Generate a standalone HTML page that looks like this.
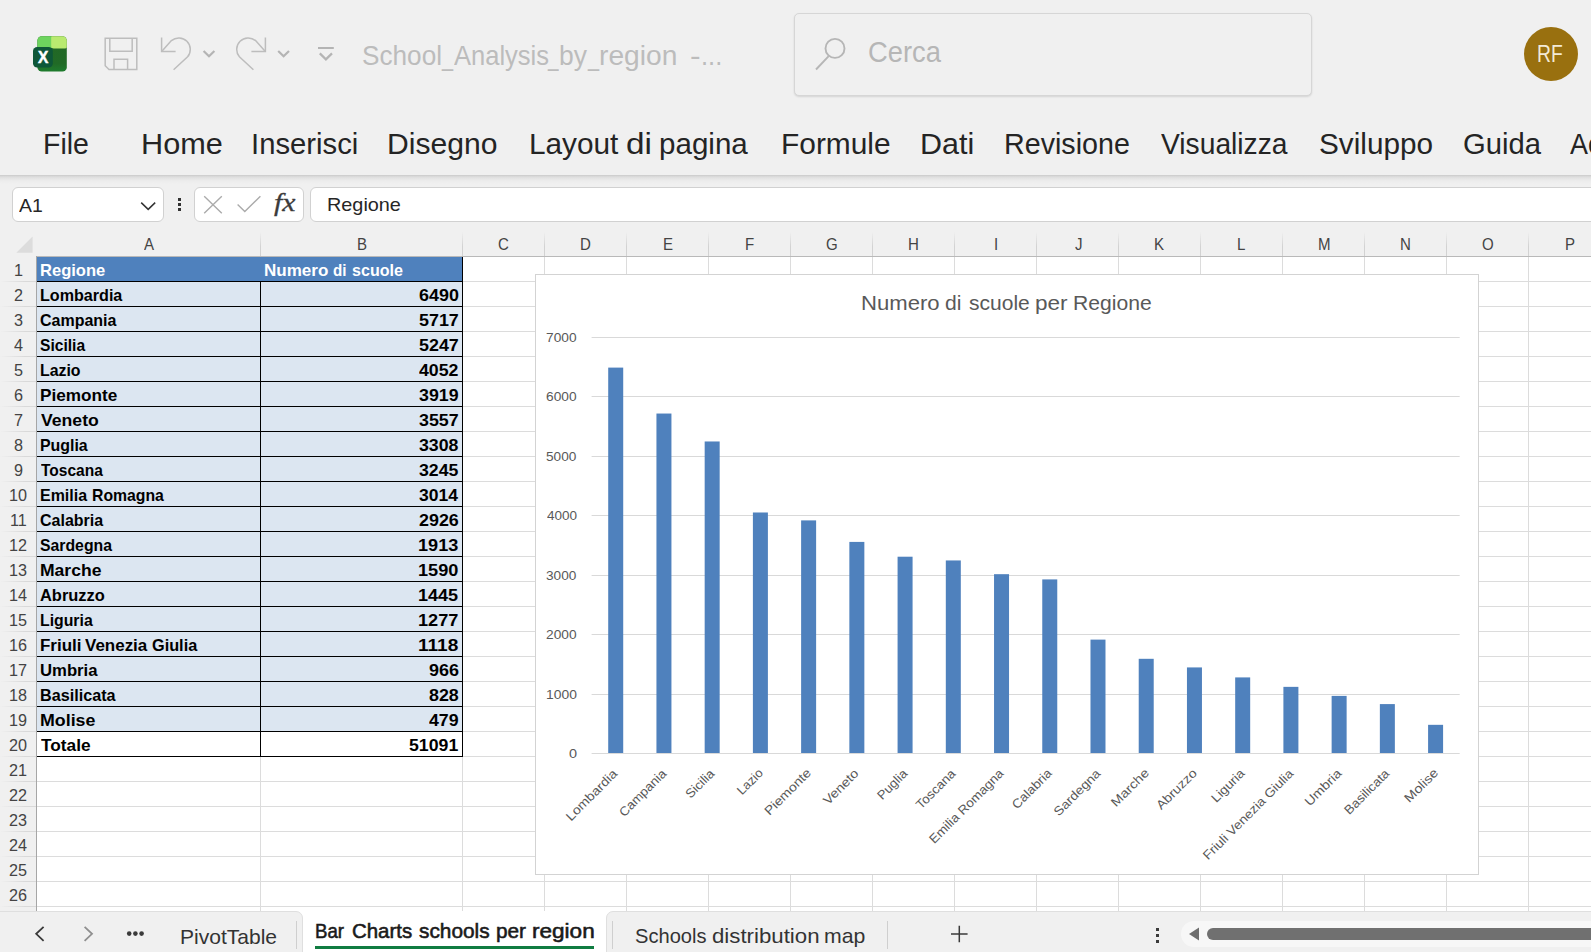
<!DOCTYPE html>
<html lang="it"><head><meta charset="utf-8"><title>School_Analysis_by_region - Excel</title>
<style>
html,body{margin:0;padding:0;width:1591px;height:952px;overflow:hidden;background:#f0f0f0}
#app{position:absolute;left:0;top:0;width:1591px;height:952px;overflow:hidden;background:#f0f0f0;
 font-family:"Liberation Sans",sans-serif;}
.t{position:absolute;white-space:nowrap;line-height:1;transform-origin:0 0;}
.abs{position:absolute}
svg{position:absolute;overflow:visible}
.vl{position:absolute;width:1px}
.hl{position:absolute;height:1px}
</style></head><body><div id="app">

<div id="titlebar">
<svg style="left:28px;top:30px" width="48" height="48" viewBox="28 30 48 48">
<defs><clipPath id="xc"><rect x="37.4" y="36.2" width="29.4" height="35.4" rx="4.4"/></clipPath>
<linearGradient id="xg" x1="0" y1="0" x2="0" y2="1"><stop offset="0" stop-color="#226625"/><stop offset="0.75" stop-color="#216a26"/><stop offset="1" stop-color="#1e7f2f"/></linearGradient></defs>
<g clip-path="url(#xc)">
<rect x="37" y="35" width="31" height="38" fill="url(#xg)"/>
<rect x="37" y="35" width="15" height="13" fill="#6dd45e"/>
<rect x="51.2" y="35.4" width="16.2" height="13" rx="2.5" fill="#b9ea70"/>
</g>
<rect x="33" y="46.9" width="19.8" height="20.7" rx="4.2" fill="#0e5738"/>
</svg>
<span class="t " style="left:38.05px;top:49.62px;font-size:15.92px;color:#fff;font-weight:700;transform:scaleX(0.9700);-webkit-text-stroke:0.5px #fff;">X</span>
<svg style="left:100px;top:30px" width="50" height="50" viewBox="100 30 50 50" fill="none" stroke="#bdbdbd" stroke-width="1.5" stroke-linejoin="miter">
<path d="M105.2 38.2 H136.8 V69.6 H109 L105.2 65.8 Z"/>
<path d="M109.8 38.2 V51.2 H132.2 V38.2"/>
<path d="M114 69.6 V59.2 H127.6 V69.6"/>
</svg>
<svg style="left:150px;top:30px" width="70" height="50" viewBox="150 30 70 50" fill="none" stroke="#bdbdbd" stroke-width="1.5">
<path d="M161.6 37.6 V51.6 H175.6"/>
<path d="M161.9 51.3 L171.4 40.6 A11.5 11.5 0 0 1 187.6 56.8 L173.6 69.8"/>
<path d="M203.6 51 L209 56.2 L214.4 51" stroke-width="2.2" stroke="#b4b4b4"/>
</svg>
<svg style="left:225px;top:30px" width="75" height="50" viewBox="225 30 75 50" fill="none" stroke="#bdbdbd" stroke-width="1.5">
<path d="M265.4 37.6 V51.6 H251.4"/>
<path d="M265.1 51.3 L255.6 40.6 A11.5 11.5 0 0 0 239.4 56.8 L253.4 69.8"/>
<path d="M278.2 51 L283.6 56.2 L289 51" stroke-width="2.2" stroke="#b4b4b4"/>
</svg>
<svg style="left:310px;top:40px" width="32" height="30" viewBox="310 40 32 30" fill="none" stroke="#bdbdbd" stroke-width="1.7">
<path d="M318 48 H333.8" stroke="#b4b4b4" stroke-width="2"/>
<path d="M319.8 53.4 L325.9 59.4 L332 53.4" stroke="#b4b4b4" stroke-width="2.2"/>
</svg>
<span class="t" style="left:0;top:41.89px;font-size:27.65px;color:#bcbcbc;"><span class="t" style="left:361.62px;top:0;transform:scaleX(0.9467)">School</span><span class="t" style="left:441.90px;top:0;transform:scaleX(0.7201)">_</span><span class="t" style="left:453.54px;top:0;transform:scaleX(0.9234)">Analysis</span><span class="t" style="left:548.48px;top:0;transform:scaleX(0.6829)">_</span><span class="t" style="left:558.88px;top:0;transform:scaleX(0.9558)">by</span><span class="t" style="left:587.90px;top:0;transform:scaleX(0.7201)">_</span><span class="t" style="left:598.77px;top:0;transform:scaleX(1.0193)">region</span></span>
<span class="t" style="left:0;top:41.89px;font-size:27.65px;color:#bcbcbc;"><span class="t" style="left:690.37px;top:0;transform:scaleX(1.1513)">-</span><span class="t" style="left:700.51px;top:0;transform:scaleX(0.9200)">...</span></span>
<div class="abs" style="left:794px;top:13px;width:516px;height:81px;border:1px solid #d6d6d6;border-radius:5px;box-shadow:0 1px 2px rgba(0,0,0,.12);background:#f0f0f0"></div>
<svg style="left:810px;top:32px" width="40" height="44" viewBox="810 32 40 44" fill="none" stroke="#b6b6b6" stroke-width="1.9">
<circle cx="835" cy="48.4" r="9.5"/><path d="M828.7 56.2 L816 69.5"/></svg>
<span class="t " style="left:867.83px;top:37.17px;font-size:29.33px;color:#b6b6b6;transform:scaleX(0.9318);">Cerca</span>
<div class="abs" style="left:1524px;top:27px;width:54px;height:54px;border-radius:50%;background:#99700f"></div>
<span class="t " style="left:1537.01px;top:43.49px;font-size:23.04px;color:#f3ead6;transform:scaleX(0.8375);">RF</span>
</div>
<div id="menu">
<span class="t " style="left:43.45px;top:128.92px;font-size:29.75px;color:#242424;transform:scaleX(0.9575);">File</span>
<span class="t " style="left:140.77px;top:128.92px;font-size:29.75px;color:#242424;transform:scaleX(1.0313);">Home</span>
<span class="t " style="left:251.19px;top:128.92px;font-size:29.75px;color:#242424;transform:scaleX(0.9833);">Inserisci</span>
<span class="t " style="left:386.52px;top:128.92px;font-size:29.75px;color:#242424;transform:scaleX(1.0118);">Disegno</span>
<span class="t" style="left:0;top:128.92px;font-size:29.75px;color:#242424;"><span class="t" style="left:528.84px;top:0;transform:scaleX(1.0007)">Layout</span> <span class="t" style="left:625.79px;top:0;transform:scaleX(1.1180)">di</span> <span class="t" style="left:659.08px;top:0;transform:scaleX(0.9936)">pagina</span></span>
<span class="t " style="left:781.03px;top:128.92px;font-size:29.75px;color:#242424;transform:scaleX(1.0049);">Formule</span>
<span class="t " style="left:919.89px;top:128.92px;font-size:29.75px;color:#242424;transform:scaleX(1.0245);">Dati</span>
<span class="t " style="left:1003.74px;top:128.92px;font-size:29.75px;color:#242424;transform:scaleX(0.9631);">Revisione</span>
<span class="t " style="left:1161.16px;top:128.92px;font-size:29.75px;color:#242424;transform:scaleX(0.9484);">Visualizza</span>
<span class="t " style="left:1318.96px;top:128.92px;font-size:29.75px;color:#242424;transform:scaleX(0.9995);">Sviluppo</span>
<span class="t " style="left:1462.64px;top:128.92px;font-size:29.75px;color:#242424;transform:scaleX(0.9828);">Guida</span>
<span class="t " style="left:1570.33px;top:128.92px;font-size:29.75px;color:#242424;transform:scaleX(0.9050);">Ac</span>
</div>
<div class="abs" style="left:0;top:175px;width:1591px;height:9px;background:linear-gradient(#c9c9c9 0,#d6d6d6 12%,#dfdfdf 25%,#e7e7e7 45%,#ececec 65%,#f0f0f0 100%)"></div>
<div id="formulabar">
<div class="abs" style="left:12px;top:187px;width:152px;height:35px;border:1px solid #d1d1d1;border-radius:6px;background:#fff;box-sizing:border-box"></div>
<span class="t " style="left:19.15px;top:195.70px;font-size:19.13px;color:#262626;transform:scaleX(1.0163);">A1</span>
<svg style="left:136px;top:196px" width="24" height="20" viewBox="136 196 24 20" fill="none" stroke="#333" stroke-width="1.5"><path d="M141.2 202.6 L148.2 209.4 L155.2 202.6"/></svg>
<div class="abs" style="left:177.5px;top:198.2px;width:3.2px;height:3px;background:#333"></div>
<div class="abs" style="left:177.5px;top:203.2px;width:3.2px;height:3px;background:#333"></div>
<div class="abs" style="left:177.5px;top:208.2px;width:3.2px;height:3px;background:#333"></div>
<div class="abs" style="left:194px;top:187px;width:110px;height:35px;border:1px solid #d1d1d1;border-radius:6px;background:#fff;box-sizing:border-box"></div>
<svg style="left:200px;top:190px" width="66" height="28" viewBox="200 190 66 28" fill="none" stroke="#ababab" stroke-width="1.4">
<path d="M204.2 196.2 L221.8 213.2 M221.8 196.2 L204.2 213.2"/>
<path d="M237.6 204.6 L244.8 211.6 L260.4 196.2"/></svg>
<span class="t " style="left:274.30px;top:189.51px;font-size:25.98px;color:#3b3b3b;font-family:'Liberation Serif',serif;font-style:italic;transform:scaleX(1.1466);-webkit-text-stroke:0.3px #3b3b3b;">fx</span>
<div class="abs" style="left:310px;top:187px;width:1300px;height:35px;border:1px solid #d1d1d1;border-radius:6px;background:#fff;box-sizing:border-box"></div>
<span class="t " style="left:326.66px;top:195.89px;font-size:18.44px;color:#262626;transform:scaleX(1.0758);">Regione</span>
</div>
<div id="grid">
<div class="abs" style="left:37px;top:257px;width:1554px;height:655px;background:#fff"></div>
<div class="vl" style="left:260px;top:257px;height:655px;background:#dcdcdc"></div>
<div class="vl" style="left:462px;top:257px;height:655px;background:#dcdcdc"></div>
<div class="vl" style="left:544px;top:257px;height:655px;background:#dcdcdc"></div>
<div class="vl" style="left:626px;top:257px;height:655px;background:#dcdcdc"></div>
<div class="vl" style="left:708px;top:257px;height:655px;background:#dcdcdc"></div>
<div class="vl" style="left:790px;top:257px;height:655px;background:#dcdcdc"></div>
<div class="vl" style="left:872px;top:257px;height:655px;background:#dcdcdc"></div>
<div class="vl" style="left:954px;top:257px;height:655px;background:#dcdcdc"></div>
<div class="vl" style="left:1036px;top:257px;height:655px;background:#dcdcdc"></div>
<div class="vl" style="left:1118px;top:257px;height:655px;background:#dcdcdc"></div>
<div class="vl" style="left:1200px;top:257px;height:655px;background:#dcdcdc"></div>
<div class="vl" style="left:1282px;top:257px;height:655px;background:#dcdcdc"></div>
<div class="vl" style="left:1364px;top:257px;height:655px;background:#dcdcdc"></div>
<div class="vl" style="left:1446px;top:257px;height:655px;background:#dcdcdc"></div>
<div class="vl" style="left:1528px;top:257px;height:655px;background:#dcdcdc"></div>
<div class="vl" style="left:1610px;top:257px;height:655px;background:#dcdcdc"></div>
<div class="hl" style="left:37px;top:281px;width:1554px;background:#dcdcdc"></div>
<div class="hl" style="left:37px;top:306px;width:1554px;background:#dcdcdc"></div>
<div class="hl" style="left:37px;top:331px;width:1554px;background:#dcdcdc"></div>
<div class="hl" style="left:37px;top:356px;width:1554px;background:#dcdcdc"></div>
<div class="hl" style="left:37px;top:381px;width:1554px;background:#dcdcdc"></div>
<div class="hl" style="left:37px;top:406px;width:1554px;background:#dcdcdc"></div>
<div class="hl" style="left:37px;top:431px;width:1554px;background:#dcdcdc"></div>
<div class="hl" style="left:37px;top:456px;width:1554px;background:#dcdcdc"></div>
<div class="hl" style="left:37px;top:481px;width:1554px;background:#dcdcdc"></div>
<div class="hl" style="left:37px;top:506px;width:1554px;background:#dcdcdc"></div>
<div class="hl" style="left:37px;top:531px;width:1554px;background:#dcdcdc"></div>
<div class="hl" style="left:37px;top:556px;width:1554px;background:#dcdcdc"></div>
<div class="hl" style="left:37px;top:581px;width:1554px;background:#dcdcdc"></div>
<div class="hl" style="left:37px;top:606px;width:1554px;background:#dcdcdc"></div>
<div class="hl" style="left:37px;top:631px;width:1554px;background:#dcdcdc"></div>
<div class="hl" style="left:37px;top:656px;width:1554px;background:#dcdcdc"></div>
<div class="hl" style="left:37px;top:681px;width:1554px;background:#dcdcdc"></div>
<div class="hl" style="left:37px;top:706px;width:1554px;background:#dcdcdc"></div>
<div class="hl" style="left:37px;top:731px;width:1554px;background:#dcdcdc"></div>
<div class="hl" style="left:37px;top:756px;width:1554px;background:#dcdcdc"></div>
<div class="hl" style="left:37px;top:781px;width:1554px;background:#dcdcdc"></div>
<div class="hl" style="left:37px;top:806px;width:1554px;background:#dcdcdc"></div>
<div class="hl" style="left:37px;top:831px;width:1554px;background:#dcdcdc"></div>
<div class="hl" style="left:37px;top:856px;width:1554px;background:#dcdcdc"></div>
<div class="hl" style="left:37px;top:881px;width:1554px;background:#dcdcdc"></div>
<div class="hl" style="left:37px;top:906px;width:1554px;background:#dcdcdc"></div>
<div class="abs" style="left:0;top:232px;width:1591px;height:24px;background:#f0f0f0"></div>
<div class="hl" style="left:37px;top:256px;width:1554px;background:#b9b9b9"></div>
<div class="vl" style="left:260px;top:232px;height:24px;background:linear-gradient(#f0f0f0,#d2d2d2 60%)"></div>
<div class="vl" style="left:462px;top:232px;height:24px;background:linear-gradient(#f0f0f0,#d2d2d2 60%)"></div>
<div class="vl" style="left:544px;top:232px;height:24px;background:linear-gradient(#f0f0f0,#d2d2d2 60%)"></div>
<div class="vl" style="left:626px;top:232px;height:24px;background:linear-gradient(#f0f0f0,#d2d2d2 60%)"></div>
<div class="vl" style="left:708px;top:232px;height:24px;background:linear-gradient(#f0f0f0,#d2d2d2 60%)"></div>
<div class="vl" style="left:790px;top:232px;height:24px;background:linear-gradient(#f0f0f0,#d2d2d2 60%)"></div>
<div class="vl" style="left:872px;top:232px;height:24px;background:linear-gradient(#f0f0f0,#d2d2d2 60%)"></div>
<div class="vl" style="left:954px;top:232px;height:24px;background:linear-gradient(#f0f0f0,#d2d2d2 60%)"></div>
<div class="vl" style="left:1036px;top:232px;height:24px;background:linear-gradient(#f0f0f0,#d2d2d2 60%)"></div>
<div class="vl" style="left:1118px;top:232px;height:24px;background:linear-gradient(#f0f0f0,#d2d2d2 60%)"></div>
<div class="vl" style="left:1200px;top:232px;height:24px;background:linear-gradient(#f0f0f0,#d2d2d2 60%)"></div>
<div class="vl" style="left:1282px;top:232px;height:24px;background:linear-gradient(#f0f0f0,#d2d2d2 60%)"></div>
<div class="vl" style="left:1364px;top:232px;height:24px;background:linear-gradient(#f0f0f0,#d2d2d2 60%)"></div>
<div class="vl" style="left:1446px;top:232px;height:24px;background:linear-gradient(#f0f0f0,#d2d2d2 60%)"></div>
<div class="vl" style="left:1528px;top:232px;height:24px;background:linear-gradient(#f0f0f0,#d2d2d2 60%)"></div>
<div class="vl" style="left:1610px;top:232px;height:24px;background:linear-gradient(#f0f0f0,#d2d2d2 60%)"></div>
<span class="t " style="left:143.87px;top:236.39px;font-size:16.20px;color:#444;transform:scaleX(0.9299);">A</span>
<span class="t " style="left:356.65px;top:236.39px;font-size:16.20px;color:#444;transform:scaleX(0.9299);">B</span>
<span class="t " style="left:498.36px;top:236.39px;font-size:16.20px;color:#444;transform:scaleX(0.9299);">C</span>
<span class="t " style="left:580.19px;top:236.39px;font-size:16.20px;color:#444;transform:scaleX(0.9299);">D</span>
<span class="t " style="left:662.57px;top:236.39px;font-size:16.20px;color:#444;transform:scaleX(0.9299);">E</span>
<span class="t " style="left:744.97px;top:236.39px;font-size:16.20px;color:#444;transform:scaleX(0.9299);">F</span>
<span class="t " style="left:826.23px;top:236.39px;font-size:16.20px;color:#444;transform:scaleX(0.9299);">G</span>
<span class="t " style="left:908.46px;top:236.39px;font-size:16.20px;color:#444;transform:scaleX(0.9299);">H</span>
<span class="t " style="left:993.81px;top:236.39px;font-size:16.20px;color:#444;transform:scaleX(0.9299);">I</span>
<span class="t " style="left:1074.57px;top:236.39px;font-size:16.20px;color:#444;transform:scaleX(0.9299);">J</span>
<span class="t " style="left:1154.34px;top:236.39px;font-size:16.20px;color:#444;transform:scaleX(0.9299);">K</span>
<span class="t " style="left:1237.34px;top:236.39px;font-size:16.20px;color:#444;transform:scaleX(0.9299);">L</span>
<span class="t " style="left:1317.61px;top:236.39px;font-size:16.20px;color:#444;transform:scaleX(0.9299);">M</span>
<span class="t " style="left:1400.46px;top:236.39px;font-size:16.20px;color:#444;transform:scaleX(0.9299);">N</span>
<span class="t " style="left:1482.04px;top:236.39px;font-size:16.20px;color:#444;transform:scaleX(0.9299);">O</span>
<span class="t " style="left:1564.65px;top:236.39px;font-size:16.20px;color:#444;transform:scaleX(0.9299);">P</span>
<svg style="left:0;top:232px" width="37" height="24" viewBox="0 232 37 24"><path d="M32.6 236.5 V252.8 H16.3 Z" fill="#dcdcdc"/></svg>
<div class="vl" style="left:36px;top:256px;height:656px;background:#a6a6a6"></div>
<div class="hl" style="left:0;top:281px;width:36px;background:linear-gradient(90deg,#f0f0f0,#d9d9d9 70%)"></div>
<span class="t " style="left:13.68px;top:262.49px;font-size:16.20px;color:#444;transform:scaleX(0.9999);">1</span>
<div class="hl" style="left:0;top:306px;width:36px;background:linear-gradient(90deg,#f0f0f0,#d9d9d9 70%)"></div>
<span class="t " style="left:13.88px;top:287.49px;font-size:16.20px;color:#444;transform:scaleX(0.9999);">2</span>
<div class="hl" style="left:0;top:331px;width:36px;background:linear-gradient(90deg,#f0f0f0,#d9d9d9 70%)"></div>
<span class="t " style="left:13.94px;top:312.49px;font-size:16.20px;color:#444;transform:scaleX(0.9999);">3</span>
<div class="hl" style="left:0;top:356px;width:36px;background:linear-gradient(90deg,#f0f0f0,#d9d9d9 70%)"></div>
<span class="t " style="left:13.95px;top:337.49px;font-size:16.20px;color:#444;transform:scaleX(0.9999);">4</span>
<div class="hl" style="left:0;top:381px;width:36px;background:linear-gradient(90deg,#f0f0f0,#d9d9d9 70%)"></div>
<span class="t " style="left:13.90px;top:362.49px;font-size:16.20px;color:#444;transform:scaleX(0.9999);">5</span>
<div class="hl" style="left:0;top:406px;width:36px;background:linear-gradient(90deg,#f0f0f0,#d9d9d9 70%)"></div>
<span class="t " style="left:13.84px;top:387.49px;font-size:16.20px;color:#444;transform:scaleX(0.9999);">6</span>
<div class="hl" style="left:0;top:431px;width:36px;background:linear-gradient(90deg,#f0f0f0,#d9d9d9 70%)"></div>
<span class="t " style="left:13.88px;top:412.49px;font-size:16.20px;color:#444;transform:scaleX(0.9999);">7</span>
<div class="hl" style="left:0;top:456px;width:36px;background:linear-gradient(90deg,#f0f0f0,#d9d9d9 70%)"></div>
<span class="t " style="left:13.90px;top:437.49px;font-size:16.20px;color:#444;transform:scaleX(0.9999);">8</span>
<div class="hl" style="left:0;top:481px;width:36px;background:linear-gradient(90deg,#f0f0f0,#d9d9d9 70%)"></div>
<span class="t " style="left:13.88px;top:462.49px;font-size:16.20px;color:#444;transform:scaleX(0.9999);">9</span>
<div class="hl" style="left:0;top:506px;width:36px;background:linear-gradient(90deg,#f0f0f0,#d9d9d9 70%)"></div>
<span class="t " style="left:9.11px;top:487.49px;font-size:16.20px;color:#444;transform:scaleX(0.9999);">10</span>
<div class="hl" style="left:0;top:531px;width:36px;background:linear-gradient(90deg,#f0f0f0,#d9d9d9 70%)"></div>
<span class="t " style="left:9.77px;top:512.49px;font-size:16.20px;color:#444;transform:scaleX(0.9999);">11</span>
<div class="hl" style="left:0;top:556px;width:36px;background:linear-gradient(90deg,#f0f0f0,#d9d9d9 70%)"></div>
<span class="t " style="left:9.19px;top:537.49px;font-size:16.20px;color:#444;transform:scaleX(0.9999);">12</span>
<div class="hl" style="left:0;top:581px;width:36px;background:linear-gradient(90deg,#f0f0f0,#d9d9d9 70%)"></div>
<span class="t " style="left:9.15px;top:562.49px;font-size:16.20px;color:#444;transform:scaleX(0.9999);">13</span>
<div class="hl" style="left:0;top:606px;width:36px;background:linear-gradient(90deg,#f0f0f0,#d9d9d9 70%)"></div>
<span class="t " style="left:9.02px;top:587.49px;font-size:16.20px;color:#444;transform:scaleX(0.9999);">14</span>
<div class="hl" style="left:0;top:631px;width:36px;background:linear-gradient(90deg,#f0f0f0,#d9d9d9 70%)"></div>
<span class="t " style="left:9.13px;top:612.49px;font-size:16.20px;color:#444;transform:scaleX(0.9999);">15</span>
<div class="hl" style="left:0;top:656px;width:36px;background:linear-gradient(90deg,#f0f0f0,#d9d9d9 70%)"></div>
<span class="t " style="left:9.15px;top:637.49px;font-size:16.20px;color:#444;transform:scaleX(0.9999);">16</span>
<div class="hl" style="left:0;top:681px;width:36px;background:linear-gradient(90deg,#f0f0f0,#d9d9d9 70%)"></div>
<span class="t " style="left:9.19px;top:662.49px;font-size:16.20px;color:#444;transform:scaleX(0.9999);">17</span>
<div class="hl" style="left:0;top:706px;width:36px;background:linear-gradient(90deg,#f0f0f0,#d9d9d9 70%)"></div>
<span class="t " style="left:9.15px;top:687.49px;font-size:16.20px;color:#444;transform:scaleX(0.9999);">18</span>
<div class="hl" style="left:0;top:731px;width:36px;background:linear-gradient(90deg,#f0f0f0,#d9d9d9 70%)"></div>
<span class="t " style="left:9.17px;top:712.49px;font-size:16.20px;color:#444;transform:scaleX(0.9999);">19</span>
<div class="hl" style="left:0;top:756px;width:36px;background:linear-gradient(90deg,#f0f0f0,#d9d9d9 70%)"></div>
<span class="t " style="left:9.31px;top:737.49px;font-size:16.20px;color:#444;transform:scaleX(0.9999);">20</span>
<div class="hl" style="left:0;top:781px;width:36px;background:linear-gradient(90deg,#f0f0f0,#d9d9d9 70%)"></div>
<span class="t " style="left:9.39px;top:762.49px;font-size:16.20px;color:#444;transform:scaleX(0.9999);">21</span>
<div class="hl" style="left:0;top:806px;width:36px;background:linear-gradient(90deg,#f0f0f0,#d9d9d9 70%)"></div>
<span class="t " style="left:9.39px;top:787.49px;font-size:16.20px;color:#444;transform:scaleX(0.9999);">22</span>
<div class="hl" style="left:0;top:831px;width:36px;background:linear-gradient(90deg,#f0f0f0,#d9d9d9 70%)"></div>
<span class="t " style="left:9.35px;top:812.49px;font-size:16.20px;color:#444;transform:scaleX(0.9999);">23</span>
<div class="hl" style="left:0;top:856px;width:36px;background:linear-gradient(90deg,#f0f0f0,#d9d9d9 70%)"></div>
<span class="t " style="left:9.23px;top:837.49px;font-size:16.20px;color:#444;transform:scaleX(0.9999);">24</span>
<div class="hl" style="left:0;top:881px;width:36px;background:linear-gradient(90deg,#f0f0f0,#d9d9d9 70%)"></div>
<span class="t " style="left:9.33px;top:862.49px;font-size:16.20px;color:#444;transform:scaleX(0.9999);">25</span>
<div class="hl" style="left:0;top:906px;width:36px;background:linear-gradient(90deg,#f0f0f0,#d9d9d9 70%)"></div>
<span class="t " style="left:9.35px;top:887.49px;font-size:16.20px;color:#444;transform:scaleX(0.9999);">26</span>
<div id="table">
<div class="abs" style="left:37px;top:257px;width:426px;height:25px;background:#4f81bd"></div>
<div class="abs" style="left:37px;top:282px;width:426px;height:450px;background:#dce6f1"></div>
<div class="abs" style="left:37px;top:732px;width:426px;height:25px;background:#fff"></div>
<div class="hl" style="left:37px;top:281px;width:426px;background:#000"></div>
<div class="hl" style="left:37px;top:306px;width:426px;background:#000"></div>
<div class="hl" style="left:37px;top:331px;width:426px;background:#000"></div>
<div class="hl" style="left:37px;top:356px;width:426px;background:#000"></div>
<div class="hl" style="left:37px;top:381px;width:426px;background:#000"></div>
<div class="hl" style="left:37px;top:406px;width:426px;background:#000"></div>
<div class="hl" style="left:37px;top:431px;width:426px;background:#000"></div>
<div class="hl" style="left:37px;top:456px;width:426px;background:#000"></div>
<div class="hl" style="left:37px;top:481px;width:426px;background:#000"></div>
<div class="hl" style="left:37px;top:506px;width:426px;background:#000"></div>
<div class="hl" style="left:37px;top:531px;width:426px;background:#000"></div>
<div class="hl" style="left:37px;top:556px;width:426px;background:#000"></div>
<div class="hl" style="left:37px;top:581px;width:426px;background:#000"></div>
<div class="hl" style="left:37px;top:606px;width:426px;background:#000"></div>
<div class="hl" style="left:37px;top:631px;width:426px;background:#000"></div>
<div class="hl" style="left:37px;top:656px;width:426px;background:#000"></div>
<div class="hl" style="left:37px;top:681px;width:426px;background:#000"></div>
<div class="hl" style="left:37px;top:706px;width:426px;background:#000"></div>
<div class="hl" style="left:37px;top:731px;width:426px;background:#000"></div>
<div class="hl" style="left:37px;top:756px;width:426px;background:#000"></div>
<div class="vl" style="left:260px;top:282px;height:475px;background:#000"></div>
<div class="vl" style="left:462px;top:257px;height:500px;background:#000"></div>
<span class="t " style="left:39.58px;top:262.30px;font-size:16.06px;color:#fff;font-weight:700;transform:scaleX(1.0299);">Regione</span>
<span class="t" style="left:0;top:262.30px;font-size:16.06px;color:#fff;font-weight:700;"><span class="t" style="left:263.65px;top:0;transform:scaleX(1.0613)">Numero</span> <span class="t" style="left:332.79px;top:0;transform:scaleX(0.9449)">di</span> <span class="t" style="left:351.84px;top:0;transform:scaleX(1.0022)">scuole</span></span>
<span class="t " style="left:39.61px;top:287.30px;font-size:16.06px;color:#000;font-weight:700;transform:scaleX(1.0036);">Lombardia</span>
<span class="t " style="left:418.95px;top:287.54px;font-size:15.78px;color:#000;font-weight:700;transform:scaleX(1.1365);">6490</span>
<span class="t " style="left:40.06px;top:312.30px;font-size:16.06px;color:#000;font-weight:700;transform:scaleX(0.9959);">Campania</span>
<span class="t " style="left:419.04px;top:312.54px;font-size:15.78px;color:#000;font-weight:700;transform:scaleX(1.1352);">5717</span>
<span class="t " style="left:40.27px;top:337.30px;font-size:16.06px;color:#000;font-weight:700;transform:scaleX(0.9719);">Sicilia</span>
<span class="t " style="left:419.04px;top:337.54px;font-size:15.78px;color:#000;font-weight:700;transform:scaleX(1.1352);">5247</span>
<span class="t " style="left:39.63px;top:362.30px;font-size:16.06px;color:#000;font-weight:700;transform:scaleX(0.9886);">Lazio</span>
<span class="t " style="left:419.31px;top:362.54px;font-size:15.78px;color:#000;font-weight:700;transform:scaleX(1.1248);">4052</span>
<span class="t " style="left:39.54px;top:387.30px;font-size:16.06px;color:#000;font-weight:700;transform:scaleX(1.0698);">Piemonte</span>
<span class="t " style="left:419.18px;top:387.54px;font-size:15.78px;color:#000;font-weight:700;transform:scaleX(1.1274);">3919</span>
<span class="t " style="left:40.57px;top:412.30px;font-size:16.06px;color:#000;font-weight:700;transform:scaleX(1.0979);">Veneto</span>
<span class="t " style="left:419.18px;top:412.54px;font-size:15.78px;color:#000;font-weight:700;transform:scaleX(1.1313);">3557</span>
<span class="t " style="left:39.63px;top:437.30px;font-size:16.06px;color:#000;font-weight:700;transform:scaleX(0.9911);">Puglia</span>
<span class="t " style="left:419.18px;top:437.54px;font-size:15.78px;color:#000;font-weight:700;transform:scaleX(1.1248);">3308</span>
<span class="t " style="left:40.54px;top:462.30px;font-size:16.06px;color:#000;font-weight:700;transform:scaleX(0.9668);">Toscana</span>
<span class="t " style="left:419.18px;top:462.54px;font-size:15.78px;color:#000;font-weight:700;transform:scaleX(1.1222);">3245</span>
<span class="t" style="left:0;top:487.30px;font-size:16.06px;color:#000;font-weight:700;"><span class="t" style="left:39.82px;top:0;transform:scaleX(0.9949)">Emilia</span> <span class="t" style="left:92.33px;top:0;transform:scaleX(0.9834)">Romagna</span></span>
<span class="t " style="left:419.19px;top:487.54px;font-size:15.78px;color:#000;font-weight:700;transform:scaleX(1.1107);">3014</span>
<span class="t " style="left:40.06px;top:512.30px;font-size:16.06px;color:#000;font-weight:700;transform:scaleX(0.9962);">Calabria</span>
<span class="t " style="left:418.95px;top:512.54px;font-size:15.78px;color:#000;font-weight:700;transform:scaleX(1.1339);">2926</span>
<span class="t " style="left:40.27px;top:537.30px;font-size:16.06px;color:#000;font-weight:700;transform:scaleX(0.9844);">Sardegna</span>
<span class="t " style="left:418.45px;top:537.54px;font-size:15.78px;color:#000;font-weight:700;transform:scaleX(1.1486);">1913</span>
<span class="t " style="left:39.51px;top:562.30px;font-size:16.06px;color:#000;font-weight:700;transform:scaleX(1.0932);">Marche</span>
<span class="t " style="left:418.44px;top:562.54px;font-size:15.78px;color:#000;font-weight:700;transform:scaleX(1.1513);">1590</span>
<span class="t " style="left:40.29px;top:587.30px;font-size:16.06px;color:#000;font-weight:700;transform:scaleX(1.0238);">Abruzzo</span>
<span class="t " style="left:418.45px;top:587.54px;font-size:15.78px;color:#000;font-weight:700;transform:scaleX(1.1432);">1445</span>
<span class="t " style="left:39.63px;top:612.30px;font-size:16.06px;color:#000;font-weight:700;transform:scaleX(0.9855);">Liguria</span>
<span class="t " style="left:418.44px;top:612.54px;font-size:15.78px;color:#000;font-weight:700;transform:scaleX(1.1526);">1277</span>
<span class="t" style="left:0;top:637.30px;font-size:16.06px;color:#000;font-weight:700;"><span class="t" style="left:39.75px;top:0;transform:scaleX(1.0577)">Friuli</span> <span class="t" style="left:84.97px;top:0;transform:scaleX(1.0576)">Venezia</span> <span class="t" style="left:152.15px;top:0;transform:scaleX(1.0139)">Giulia</span></span>
<span class="t " style="left:418.39px;top:637.54px;font-size:15.78px;color:#000;font-weight:700;transform:scaleX(1.2083);">1118</span>
<span class="t " style="left:39.70px;top:662.30px;font-size:16.06px;color:#000;font-weight:700;transform:scaleX(1.0406);">Umbria</span>
<span class="t " style="left:428.73px;top:662.54px;font-size:15.78px;color:#000;font-weight:700;transform:scaleX(1.1399);">966</span>
<span class="t " style="left:39.61px;top:687.30px;font-size:16.06px;color:#000;font-weight:700;transform:scaleX(1.0081);">Basilicata</span>
<span class="t " style="left:428.82px;top:687.54px;font-size:15.78px;color:#000;font-weight:700;transform:scaleX(1.1328);">828</span>
<span class="t " style="left:39.50px;top:712.30px;font-size:16.06px;color:#000;font-weight:700;transform:scaleX(1.1087);">Molise</span>
<span class="t " style="left:429.09px;top:712.54px;font-size:15.78px;color:#000;font-weight:700;transform:scaleX(1.1258);">479</span>
<span class="t " style="left:40.53px;top:737.30px;font-size:16.06px;color:#000;font-weight:700;transform:scaleX(1.0768);">Totale</span>
<span class="t " style="left:409.27px;top:737.54px;font-size:15.78px;color:#000;font-weight:700;transform:scaleX(1.1231);">51091</span>
</div>
</div>
<div id="chart" class="abs" style="left:535px;top:274px;width:944px;height:601px;background:#fff;border:1px solid #d3d3d3;box-sizing:border-box"></div>
<svg id="chartsvg" style="left:0;top:0" width="1591" height="952" viewBox="0 0 1591 952" font-family="Liberation Sans, sans-serif">
<line x1="591.6" x2="1459.7" y1="753.5" y2="753.5" stroke="#d9d9d9" stroke-width="1"/>
<line x1="591.6" x2="1459.7" y1="694.5" y2="694.5" stroke="#d9d9d9" stroke-width="1"/>
<line x1="591.6" x2="1459.7" y1="634.5" y2="634.5" stroke="#d9d9d9" stroke-width="1"/>
<line x1="591.6" x2="1459.7" y1="575.5" y2="575.5" stroke="#d9d9d9" stroke-width="1"/>
<line x1="591.6" x2="1459.7" y1="515.5" y2="515.5" stroke="#d9d9d9" stroke-width="1"/>
<line x1="591.6" x2="1459.7" y1="456.5" y2="456.5" stroke="#d9d9d9" stroke-width="1"/>
<line x1="591.6" x2="1459.7" y1="396.5" y2="396.5" stroke="#d9d9d9" stroke-width="1"/>
<line x1="591.6" x2="1459.7" y1="337.5" y2="337.5" stroke="#d9d9d9" stroke-width="1"/>
<rect x="608.21" y="367.60" width="15.0" height="385.40" fill="#4f81bd"/>
<rect x="656.44" y="413.54" width="15.0" height="339.46" fill="#4f81bd"/>
<rect x="704.67" y="441.47" width="15.0" height="311.53" fill="#4f81bd"/>
<rect x="752.90" y="512.49" width="15.0" height="240.51" fill="#4f81bd"/>
<rect x="801.12" y="520.39" width="15.0" height="232.61" fill="#4f81bd"/>
<rect x="849.35" y="541.91" width="15.0" height="211.09" fill="#4f81bd"/>
<rect x="897.58" y="556.71" width="15.0" height="196.29" fill="#4f81bd"/>
<rect x="945.81" y="560.45" width="15.0" height="192.55" fill="#4f81bd"/>
<rect x="994.04" y="574.18" width="15.0" height="178.82" fill="#4f81bd"/>
<rect x="1042.26" y="579.41" width="15.0" height="173.59" fill="#4f81bd"/>
<rect x="1090.49" y="639.61" width="15.0" height="113.39" fill="#4f81bd"/>
<rect x="1138.72" y="658.81" width="15.0" height="94.19" fill="#4f81bd"/>
<rect x="1186.95" y="667.42" width="15.0" height="85.58" fill="#4f81bd"/>
<rect x="1235.18" y="677.41" width="15.0" height="75.59" fill="#4f81bd"/>
<rect x="1283.40" y="686.86" width="15.0" height="66.14" fill="#4f81bd"/>
<rect x="1331.63" y="695.89" width="15.0" height="57.11" fill="#4f81bd"/>
<rect x="1379.86" y="704.09" width="15.0" height="48.91" fill="#4f81bd"/>
<rect x="1428.09" y="724.83" width="15.0" height="28.17" fill="#4f81bd"/>
</svg>
<span class="t " style="left:568.71px;top:747.98px;font-size:12.43px;color:#595959;transform:scaleX(1.1648);">0</span>
<span class="t " style="left:545.86px;top:688.55px;font-size:12.43px;color:#595959;transform:scaleX(1.1171);">1000</span>
<span class="t " style="left:546.21px;top:629.12px;font-size:12.43px;color:#595959;transform:scaleX(1.1041);">2000</span>
<span class="t " style="left:546.39px;top:569.69px;font-size:12.43px;color:#595959;transform:scaleX(1.0976);">3000</span>
<span class="t " style="left:546.60px;top:510.26px;font-size:12.43px;color:#595959;transform:scaleX(1.0900);">4000</span>
<span class="t " style="left:546.35px;top:450.83px;font-size:12.43px;color:#595959;transform:scaleX(1.0989);">5000</span>
<span class="t " style="left:546.21px;top:391.40px;font-size:12.43px;color:#595959;transform:scaleX(1.1041);">6000</span>
<span class="t " style="left:546.21px;top:331.97px;font-size:12.43px;color:#595959;transform:scaleX(1.1041);">7000</span>
<span class="t" style="left:0;top:293.06px;font-size:20.25px;color:#595959;"><span class="t" style="left:860.78px;top:0;transform:scaleX(1.0919)">Numero</span> <span class="t" style="left:945.20px;top:0;transform:scaleX(1.0431)">di</span> <span class="t" style="left:969.12px;top:0;transform:scaleX(1.0384)">scuole</span> <span class="t" style="left:1035.33px;top:0;transform:scaleX(1.1142)">per</span> <span class="t" style="left:1073.36px;top:0;transform:scaleX(1.0425)">Regione</span></span>
<div class="abs" style="left:619.31px;top:774.70px;width:0;height:0;transform-origin:0 0;transform:rotate(-45deg)"><span class="t" style="left:-66.77px;top:-10.64px;font-size:12.57px;color:#595959;transform:scaleX(1.1235)">Lombardia</span></div>
<div class="abs" style="left:667.54px;top:774.70px;width:0;height:0;transform-origin:0 0;transform:rotate(-45deg)"><span class="t" style="left:-60.87px;top:-10.64px;font-size:12.57px;color:#595959;transform:scaleX(1.0619)">Campania</span></div>
<div class="abs" style="left:715.77px;top:774.70px;width:0;height:0;transform-origin:0 0;transform:rotate(-45deg)"><span class="t" style="left:-34.80px;top:-10.64px;font-size:12.57px;color:#595959;transform:scaleX(1.0597)">Sicilia</span></div>
<div class="abs" style="left:764.00px;top:774.70px;width:0;height:0;transform-origin:0 0;transform:rotate(-45deg)"><span class="t" style="left:-30.16px;top:-10.64px;font-size:12.57px;color:#595959;transform:scaleX(1.0210)">Lazio</span></div>
<div class="abs" style="left:812.23px;top:774.70px;width:0;height:0;transform-origin:0 0;transform:rotate(-45deg)"><span class="t" style="left:-59.27px;top:-10.64px;font-size:12.57px;color:#595959;transform:scaleX(1.1280)">Piemonte</span></div>
<div class="abs" style="left:860.45px;top:774.70px;width:0;height:0;transform-origin:0 0;transform:rotate(-45deg)"><span class="t" style="left:-43.57px;top:-10.64px;font-size:12.57px;color:#595959;transform:scaleX(1.1282)">Veneto</span></div>
<div class="abs" style="left:908.68px;top:774.70px;width:0;height:0;transform-origin:0 0;transform:rotate(-45deg)"><span class="t" style="left:-36.89px;top:-10.64px;font-size:12.57px;color:#595959;transform:scaleX(1.0558)">Puglia</span></div>
<div class="abs" style="left:956.91px;top:774.70px;width:0;height:0;transform-origin:0 0;transform:rotate(-45deg)"><span class="t" style="left:-49.90px;top:-10.64px;font-size:12.57px;color:#595959;transform:scaleX(1.0658)">Toscana</span></div>
<div class="abs" style="left:1005.14px;top:774.70px;width:0;height:0;transform-origin:0 0;transform:rotate(-45deg)"><span class="t" style="left:-99.22px;top:-10.64px;font-size:12.57px;color:#595959;transform:scaleX(1.0757)">Emilia Romagna</span></div>
<div class="abs" style="left:1053.36px;top:774.70px;width:0;height:0;transform-origin:0 0;transform:rotate(-45deg)"><span class="t" style="left:-50.48px;top:-10.64px;font-size:12.57px;color:#595959;transform:scaleX(1.0781)">Calabria</span></div>
<div class="abs" style="left:1101.59px;top:774.70px;width:0;height:0;transform-origin:0 0;transform:rotate(-45deg)"><span class="t" style="left:-60.02px;top:-10.64px;font-size:12.57px;color:#595959;transform:scaleX(1.1009)">Sardegna</span></div>
<div class="abs" style="left:1149.82px;top:774.70px;width:0;height:0;transform-origin:0 0;transform:rotate(-45deg)"><span class="t" style="left:-47.18px;top:-10.64px;font-size:12.57px;color:#595959;transform:scaleX(1.1409)">Marche</span></div>
<div class="abs" style="left:1198.05px;top:774.70px;width:0;height:0;transform-origin:0 0;transform:rotate(-45deg)"><span class="t" style="left:-51.04px;top:-10.64px;font-size:12.57px;color:#595959;transform:scaleX(1.1193)">Abruzzo</span></div>
<div class="abs" style="left:1246.28px;top:774.70px;width:0;height:0;transform-origin:0 0;transform:rotate(-45deg)"><span class="t" style="left:-41.34px;top:-10.64px;font-size:12.57px;color:#595959;transform:scaleX(1.0953)">Liguria</span></div>
<div class="abs" style="left:1294.50px;top:774.70px;width:0;height:0;transform-origin:0 0;transform:rotate(-45deg)"><span class="t" style="left:-121.94px;top:-10.64px;font-size:12.57px;color:#595959;transform:scaleX(1.0974)">Friuli Venezia Giulia</span></div>
<div class="abs" style="left:1342.73px;top:774.70px;width:0;height:0;transform-origin:0 0;transform:rotate(-45deg)"><span class="t" style="left:-46.21px;top:-10.64px;font-size:12.57px;color:#595959;transform:scaleX(1.1399)">Umbria</span></div>
<div class="abs" style="left:1390.96px;top:774.70px;width:0;height:0;transform-origin:0 0;transform:rotate(-45deg)"><span class="t" style="left:-57.92px;top:-10.64px;font-size:12.57px;color:#595959;transform:scaleX(1.0759)">Basilicata</span></div>
<div class="abs" style="left:1439.19px;top:774.70px;width:0;height:0;transform-origin:0 0;transform:rotate(-45deg)"><span class="t" style="left:-41.50px;top:-10.64px;font-size:12.57px;color:#595959;transform:scaleX(1.1606)">Molise</span></div>
<div id="tabs">
<div class="abs" style="left:0;top:911px;width:1591px;height:41px;background:#fff"></div>
<div class="abs" style="left:-2px;top:911px;width:305px;height:45px;background:#f0f0f0;border:1px solid #dfdfdf;border-radius:0 7px 0 0;box-sizing:border-box"></div>
<div class="abs" style="left:606px;top:911px;width:991px;height:45px;background:#f0f0f0;border:1px solid #dfdfdf;border-radius:7px 0 0 0;box-sizing:border-box"></div>
<svg style="left:25px;top:920px" width="130" height="28" viewBox="25 920 130 28" fill="none" stroke-width="1.8">
<path d="M43.6 926.8 L36.2 933.8 L43.6 940.8" stroke="#3a3a3a"/>
<path d="M84.6 926.8 L92 933.8 L84.6 940.8" stroke="#8f8f8f"/>
<g fill="#3a3a3a" stroke="none"><circle cx="129.2" cy="933.6" r="2.3"/><circle cx="135.4" cy="933.6" r="2.3"/><circle cx="141.6" cy="933.6" r="2.3"/></g></svg>
<span class="t " style="left:179.86px;top:926.56px;font-size:20.25px;color:#333;transform:scaleX(1.0388);">PivotTable</span>
<div class="vl" style="left:296px;top:921px;height:28px;background:#cfcfcf"></div>
<span class="t" style="left:0;top:922.19px;font-size:19.97px;color:#1a1a1a;-webkit-text-stroke:0.55px #1a1a1a;"><span class="t" style="left:315.06px;top:0;transform:scaleX(0.9344)">Bar</span> <span class="t" style="left:351.68px;top:0;transform:scaleX(1.0242)">Charts</span> <span class="t" style="left:418.53px;top:0;transform:scaleX(1.0443)">schools</span> <span class="t" style="left:495.55px;top:0;transform:scaleX(1.0417)">per</span> <span class="t" style="left:532.03px;top:0;transform:scaleX(1.1299)">region</span></span>
<div class="abs" style="left:315px;top:946px;width:279px;height:3px;background:#107c41"></div>
<div class="vl" style="left:612px;top:921px;height:28px;background:#cfcfcf"></div>
<span class="t" style="left:0;top:926.06px;font-size:20.25px;color:#333;"><span class="t" style="left:634.70px;top:0;transform:scaleX(0.9926)">Schools</span> <span class="t" style="left:711.55px;top:0;transform:scaleX(1.0982)">distribution</span> <span class="t" style="left:824.02px;top:0;transform:scaleX(1.0493)">map</span></span>
<div class="vl" style="left:887px;top:921px;height:28px;background:#cfcfcf"></div>
<svg style="left:945px;top:920px" width="30" height="28" viewBox="945 920 30 28" fill="none" stroke="#3a3a3a" stroke-width="1.5"><path d="M951 934 H967.6 M959.3 925.7 V942.3"/></svg>
<div class="abs" style="left:1155.5px;top:928.2px;width:3px;height:3px;background:#3a3a3a"></div>
<div class="abs" style="left:1155.5px;top:934.2px;width:3px;height:3px;background:#3a3a3a"></div>
<div class="abs" style="left:1155.5px;top:940.2px;width:3px;height:3px;background:#3a3a3a"></div>
<div class="abs" style="left:1181px;top:921px;width:440px;height:26px;border-radius:13px;background:#f7f7f7"></div>
<svg style="left:1185px;top:924px" width="18" height="20" viewBox="1185 924 18 20"><path d="M1189 934 L1199 927.4 V940.6 Z" fill="#6e6e6e"/></svg>
<div class="abs" style="left:1206.6px;top:928.1px;width:420px;height:12px;border-radius:6px;background:#707070"></div>
</div>
</div></body></html>
